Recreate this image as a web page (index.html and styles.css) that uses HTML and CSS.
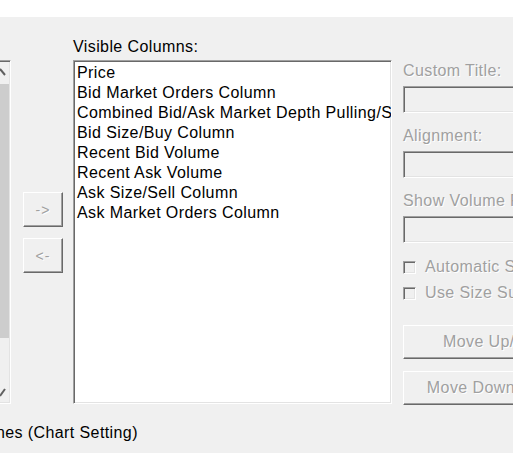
FILE: index.html
```html
<!DOCTYPE html>
<html>
<head>
<meta charset="utf-8">
<link rel="stylesheet" href="styles.css">
</head>
<body>
<div class="window">
  <div class="topband"></div>
  <div class="content">
    <div class="left-list">
      <div class="scrollbar">
        <div class="sb-btn sb-up">
          <svg width="10" height="17" viewBox="0 0 10 17"><path d="M0 6 L5 12" stroke="#606060" stroke-width="2" fill="none"/></svg>
        </div>
        <div class="sb-track"><div class="sb-thumb"></div></div>
        <div class="sb-btn sb-down">
          <svg width="10" height="17" viewBox="0 0 10 17"><path d="M0 11 L5 4" stroke="#606060" stroke-width="2" fill="none"/></svg>
        </div>
      </div>
    </div>
    <div class="arrows">
      <div class="btn small">-&gt;</div>
      <div class="btn small">&lt;-</div>
    </div>
    <div class="center">
      <div class="label">Visible Columns:</div>
      <div class="listbox">
        <div class="item">Price</div>
        <div class="item">Bid Market Orders Column</div>
        <div class="item">Combined Bid/Ask Market Depth Pulling/Stacking Column</div>
        <div class="item">Bid Size/Buy Column</div>
        <div class="item">Recent Bid Volume</div>
        <div class="item">Recent Ask Volume</div>
        <div class="item">Ask Size/Sell Column</div>
        <div class="item">Ask Market Orders Column</div>
      </div>
    </div>
    <div class="right">
      <div class="dlabel">Custom Title:</div>
      <div class="edit"></div>
      <div class="dlabel">Alignment:</div>
      <div class="edit"></div>
      <div class="dlabel">Show Volume Profile:</div>
      <div class="edit"></div>
      <div class="checks">
        <div class="check"><span class="box"></span><span class="dtext">Automatic Size</span></div>
        <div class="check"><span class="box"></span><span class="dtext">Use Size Subtotal</span></div>
      </div>
      <div class="btn wide first">Move Up/Left</div>
      <div class="btn wide">Move Down/Right</div>
    </div>
  </div>
  <div class="bottom">nes (Chart Setting)</div>
</div>
</body>
</html>
```

FILE: styles.css
```css
html, body {
  margin: 0;
  padding: 0;
  background: #f0f0f0;
  overflow: hidden;
}
.window {
  width: 513px;
  height: 453px;
  overflow: hidden;
  font-family: "Liberation Sans", Arial, sans-serif;
  font-size: 16px;
  letter-spacing: 0.4px;
  line-height: 20px;
  color: #000;
}
.topband {
  height: 17px;
  background: #fff;
}
.content {
  display: flex;
  align-items: flex-start;
  padding-top: 19px;
}
.left-list {
  flex: none;
  width: 11px;
  height: 344px;
  margin-top: 24px;
  box-sizing: border-box;
  border-top: 1px solid #a0a0a0;
  border-bottom: 1px solid #fff;
  border-right: 1px solid #fff;
  box-shadow: inset 0 1px 0 #696969, inset -1px -1px 0 #e3e3e3;
  padding: 2px 1px 1px 0;
  background: #f0f0f0;
}
.scrollbar {
  display: flex;
  flex-direction: column;
  height: 100%;
}
.sb-btn {
  height: 17px;
  flex: none;
}
.sb-btn svg {
  display: block;
}
.sb-track {
  flex: 1;
  padding-top: 4px;
}
.sb-thumb {
  height: 254px;
  background: #cdcdcd;
}
.arrows {
  flex: none;
  display: flex;
  flex-direction: column;
  gap: 11px;
  margin-left: 12px;
  margin-top: 156px;
}
.btn {
  box-sizing: border-box;
  background: #f0f0f0;
  border-top: 1px solid #fff;
  border-left: 1px solid #fff;
  border-right: 1px solid #696969;
  border-bottom: 1px solid #696969;
  box-shadow: inset -1px -1px 0 #a0a0a0;
  color: #a0a0a0;
  text-shadow: 1px 1px 0 #fff;
  display: flex;
  align-items: center;
  justify-content: center;
  white-space: nowrap;
}
.btn.small {
  width: 40px;
  height: 35px;
  font-size: 14px;
  letter-spacing: 1px;
}
.center {
  flex: none;
  margin-left: 10px;
  display: flex;
  flex-direction: column;
}
.label {
  height: 20px;
  padding-top: 1px;
  margin-bottom: 3px;
}
.listbox {
  box-sizing: border-box;
  width: 319px;
  height: 344px;
  background: #fff;
  border-top: 1px solid #a0a0a0;
  border-left: 1px solid #a0a0a0;
  border-right: 1px solid #fff;
  border-bottom: 1px solid #fff;
  box-shadow: inset 1px 1px 0 #696969, inset -1px -1px 0 #e3e3e3;
  padding: 2px 2px 0 3px;
  overflow: hidden;
}
.item {
  white-space: nowrap;
  height: 20px;
}
.right {
  flex: none;
  width: 180px;
  margin-left: 11px;
  margin-top: 24px;
  display: flex;
  flex-direction: column;
}
.dlabel, .dtext {
  color: #a0a0a0;
  text-shadow: 1px 1px 0 #fff;
  white-space: nowrap;
}
.dlabel {
  height: 20px;
  padding-top: 1px;
  margin-bottom: 5px;
}
.edit {
  box-sizing: border-box;
  height: 27px;
  margin-bottom: 12px;
  background: #f0f0f0;
  border-top: 1px solid #a0a0a0;
  border-left: 1px solid #a0a0a0;
  border-right: 1px solid #fff;
  border-bottom: 1px solid #fff;
  box-shadow: inset 1px 1px 0 #696969, inset -1px -1px 0 #e3e3e3;
}
.checks {
  display: flex;
  flex-direction: column;
  gap: 6px;
  margin-top: 2px;
}
.check {
  display: flex;
  align-items: center;
  height: 20px;
  gap: 9px;
}
.box {
  box-sizing: border-box;
  width: 13px;
  height: 13px;
  flex: none;
  background: #f0f0f0;
  border-top: 1px solid #a0a0a0;
  border-left: 1px solid #a0a0a0;
  border-right: 1px solid #fff;
  border-bottom: 1px solid #fff;
  box-shadow: inset 1px 1px 0 #696969, inset -1px -1px 0 #e3e3e3;
}
.btn.wide {
  height: 34px;
}
.btn.first {
  margin-top: 22px;
  margin-bottom: 12px;
}
.bottom {
  margin-top: 18px;
  margin-left: -4px;
  white-space: nowrap;
}
```
